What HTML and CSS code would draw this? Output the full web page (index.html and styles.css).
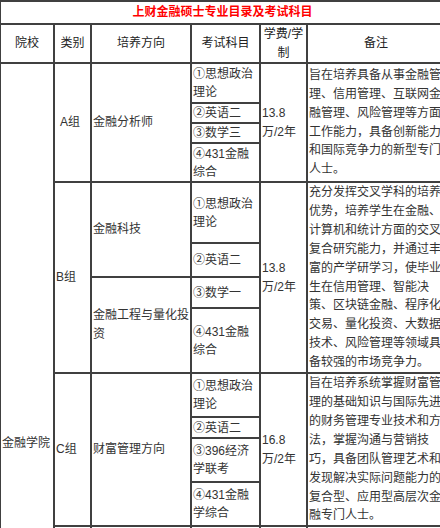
FILE: index.html
```html
<!DOCTYPE html>
<html lang="zh-CN">
<head>
<meta charset="utf-8">
<title>上财金融硕士专业目录及考试科目</title>
<link rel="stylesheet" href="styles.css">
</head>
<body>
<table class="major-table">
  <colgroup>
    <col class="c-school">
    <col class="c-group">
    <col class="c-dir">
    <col class="c-subj">
    <col class="c-fee">
    <col class="c-note">
  </colgroup>
  <tr class="r-title">
    <td colspan="6" class="title">上财金融硕士专业目录及考试科目</td>
  </tr>
  <tr class="head">
    <th>院校</th>
    <th>类别</th>
    <th>培养方向</th>
    <th>考试科目</th>
    <th>学费/学制</th>
    <th>备注</th>
  </tr>
  <tr class="h40">
    <td rowspan="16" class="school">金融学院</td>
    <td rowspan="4"><span class="indent"></span>A组</td>
    <td rowspan="4">金融分析师</td>
    <td class="subj">①思想政治理论</td>
    <td rowspan="4">13.8万/2年</td>
    <td rowspan="4" class="note">旨在培养具备从事金融管理、信用管理、互联网金融管理、风险管理等方面工作能力，具备创新能力和国际竞争力的新型专门人士。</td>
  </tr>
  <tr class="h20"><td class="subj">②英语二</td></tr>
  <tr class="h20"><td class="subj">③数学三</td></tr>
  <tr class="h39"><td class="subj">④431金融综合</td></tr>
  <tr class="h61">
    <td rowspan="4">B组</td>
    <td rowspan="2">金融科技</td>
    <td class="subj">①思想政治理论</td>
    <td rowspan="4">13.8万/2年</td>
    <td rowspan="4" class="note">充分发挥交叉学科的培养优势，培养学生在金融、计算机和统计方面的交叉复合研究能力，并通过丰富的产学研学习，使毕业生在信用管理、智能决策、区块链金融、程序化交易、量化投资、大数据技术、风险管理等领域具备较强的市场竞争力。</td>
  </tr>
  <tr class="h34"><td class="subj">②英语二</td></tr>
  <tr class="h31">
    <td rowspan="2">金融工程与量化投资</td>
    <td class="subj">③数学一</td>
  </tr>
  <tr class="h65"><td class="subj">④431金融综合</td></tr>
  <tr class="h44">
    <td rowspan="4">C组</td>
    <td rowspan="4">财富管理方向</td>
    <td class="subj">①思想政治理论</td>
    <td rowspan="4">16.8万/2年</td>
    <td rowspan="4" class="note">旨在培养系统掌握财富管理的基础知识与国际先进的财务管理专业技术和方法，掌握沟通与营销技巧，具备团队管理艺术和发现解决实际问题能力的复合型、应用型高层次金融专门人士。</td>
  </tr>
  <tr class="h21"><td class="subj">②英语二</td></tr>
  <tr class="h44"><td class="subj">③396经济学联考</td></tr>
  <tr class="h44"><td class="subj">④431金融学综合</td></tr>
  <tr class="h80">
    <td rowspan="4">D组</td>
    <td rowspan="4">公司金融方向</td>
    <td class="subj">①思想政治理论</td>
    <td rowspan="4">16.8万/2年</td>
    <td rowspan="4" class="note">旨在培养掌握公司金融理论与实务，具备投融资决策、并购重组与资本运作能力的复合型、应用型高层次金融专门人士。</td>
  </tr>
  <tr class="h60"><td class="subj">②英语二</td></tr>
  <tr class="h78"><td class="subj">③396经济学联考</td></tr>
  <tr class="h80"><td class="subj">④431金融学综合</td></tr>
</table>
</body>
</html>
```

FILE: styles.css
```css
html, body {
  margin: 0;
  padding: 0;
  overflow: hidden;
  background: #fff;
}

body {
  font-family: "Liberation Sans", "Noto Sans CJK SC", sans-serif;
  font-size: 12px;
  line-height: 19px;
  color: #333;
}

.major-table {
  border-collapse: collapse;
  table-layout: fixed;
  width: 445px;
  margin-left: -1px;
}

.c-school { width: 54px; }
.c-group { width: 37px; }
.c-dir { width: 100px; }
.c-subj { width: 69px; }
.c-fee { width: 47px; }
.c-note { width: 138px; }

.major-table td,
.major-table th {
  border: 2px solid #404040;
  padding: 0 1px;
  vertical-align: middle;
  text-align: left;
}

.major-table .subj {
  line-height: 18px;
}

.major-table .note {
  line-height: 18.9px;
}

.major-table .title {
  text-align: center;
  color: #f00;
  font-weight: bold;
  padding: 1px 0;
}

.major-table .head th {
  font-weight: normal;
  text-align: center;
  color: #222;
  line-height: 18.5px;
}

.indent {
  display: inline-block;
  width: 4px;
}

.h20 { height: 20px; }
.h21 { height: 21px; }
.h31 { height: 31px; }
.h34 { height: 34px; }
.h39 { height: 39px; }
.h40 { height: 40px; }
.h44 { height: 44px; }
.h60 { height: 60px; }
.h61 { height: 61px; }
.h65 { height: 65px; }
.h78 { height: 78px; }
.h80 { height: 80px; }
```
